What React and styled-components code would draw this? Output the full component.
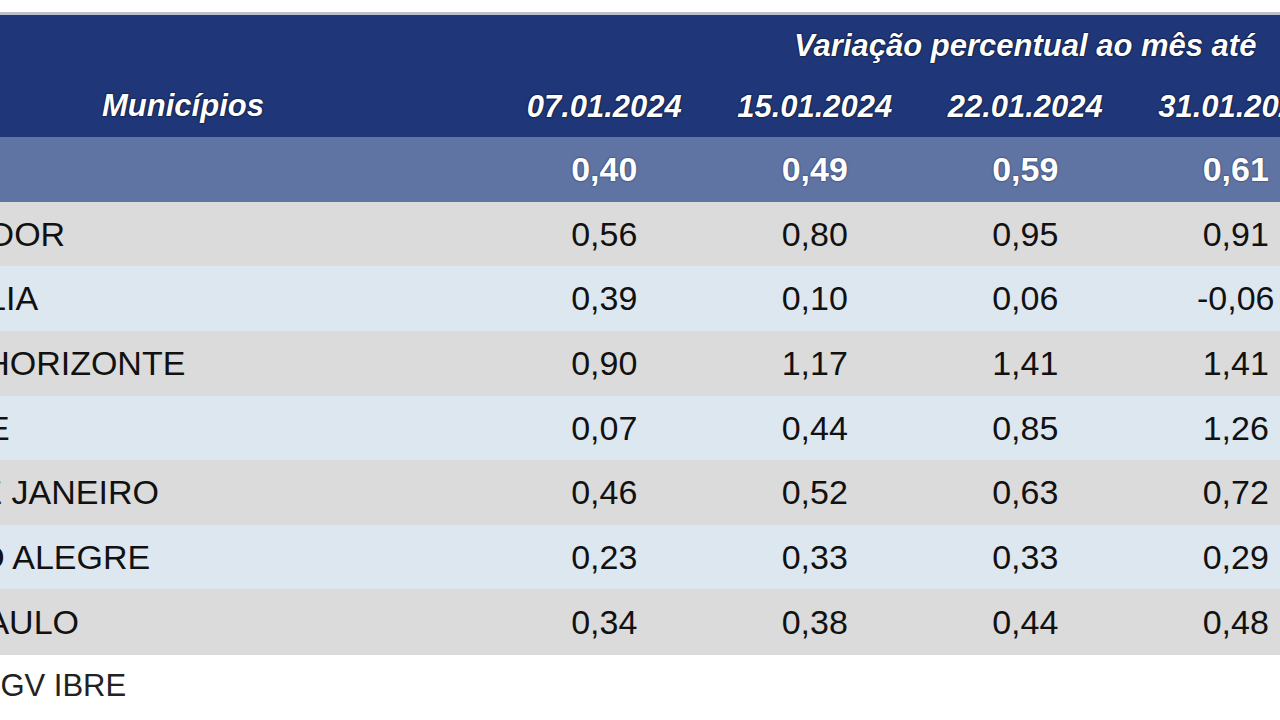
import React from "react";
import styled, { createGlobalStyle } from "styled-components";

const GlobalStyle = createGlobalStyle`
  html, body {
    margin: 0;
    padding: 0;
    background: #ffffff;
    overflow: hidden;
  }
  body {
    font-family: "Liberation Sans", Arial, sans-serif;
    width: 1280px;
    height: 720px;
  }
`;

const COLS = "632px repeat(5, 210.5px)";

const Page = styled.div`
  padding-top: 12px;
  margin-left: -133px;
  width: 1685px;
`;

const Table = styled.div`
  border-top: 3px solid #bcc0cb;
`;

const HeadBlock = styled.div`
  display: grid;
  grid-template-columns: ${COLS};
  grid-template-rows: 61px 61px;
  background: #1f3778;
  color: #ffffff;
  font-weight: bold;
  font-style: italic;
  font-size: 31px;
  text-shadow: 0 0 2px rgba(0, 0, 20, 0.9), 0 0 1px rgba(0, 0, 20, 0.9);
`;

const HeadCell = styled.div`
  display: flex;
  align-items: center;
  justify-content: center;
  white-space: nowrap;
  grid-column: ${(p) => p.$col || "auto"};
  grid-row: ${(p) => p.$row || "auto"};
`;

const ColumnTitle = styled(HeadCell)`
  align-items: flex-end;
  padding-bottom: 13px;
`;

const Row = styled.div`
  display: grid;
  grid-template-columns: ${COLS};
  height: ${(p) => p.$h}px;
  background: ${(p) => p.$bg};
  color: ${(p) => p.$color || "#111111"};
  font-size: 34px;
  font-weight: ${(p) => (p.$bold ? "bold" : "normal")};
  text-shadow: ${(p) =>
    p.$bold ? "0 0 2px rgba(10, 20, 60, 0.8)" : "none"};
`;

const Label = styled.div`
  display: flex;
  align-items: center;
  padding-left: 18px;
  white-space: nowrap;
`;

const Value = styled.div`
  display: flex;
  align-items: center;
  justify-content: center;
  white-space: nowrap;
`;

const Source = styled.div`
  padding-left: 18px;
  height: 62px;
  display: flex;
  align-items: center;
  font-size: 31px;
  color: #222222;
  white-space: nowrap;
`;

const dates = ["07.01.2024", "15.01.2024", "22.01.2024", "31.01.2024"];

const rows = [
  ["SALVADOR", "0,56", "0,80", "0,95", "0,91"],
  ["BRASÍLIA", "0,39", "0,10", "0,06", "-0,06"],
  ["BELO HORIZONTE", "0,90", "1,17", "1,41", "1,41"],
  ["RECIFE", "0,07", "0,44", "0,85", "1,26"],
  ["RIO DE JANEIRO", "0,46", "0,52", "0,63", "0,72"],
  ["PORTO ALEGRE", "0,23", "0,33", "0,33", "0,29"],
  ["SÃO PAULO", "0,34", "0,38", "0,44", "0,48"],
];

const heights = [64, 65, 65, 64, 65, 64, 66];

export default function App() {
  return (
    <>
      <GlobalStyle />
      <Page>
        <Table>
          <HeadBlock>
            <ColumnTitle $col="1" $row="1 / span 2">
              Municípios
            </ColumnTitle>
            <HeadCell $col="2 / span 5" $row="1">
              Variação percentual ao mês até
            </HeadCell>
            {dates.map((d, i) => (
              <HeadCell key={d} $col={`${i + 2}`} $row="2">
                {d}
              </HeadCell>
            ))}
            <HeadCell $col="6" $row="2" />
          </HeadBlock>

          <Row $h={65} $bg="#5f74a3" $color="#ffffff" $bold>
            <Label />
            <Value>0,40</Value>
            <Value>0,49</Value>
            <Value>0,59</Value>
            <Value>0,61</Value>
            <Value />
          </Row>

          {rows.map((r, i) => (
            <Row key={r[0]} $h={heights[i]} $bg={i % 2 === 0 ? "#dbdbdb" : "#dde7f0"}>
              <Label>{r[0]}</Label>
              {r.slice(1).map((v, j) => (
                <Value key={j}>{v}</Value>
              ))}
              <Value />
            </Row>
          ))}
        </Table>
        <Source>Fonte: FGV IBRE</Source>
      </Page>
    </>
  );
}
